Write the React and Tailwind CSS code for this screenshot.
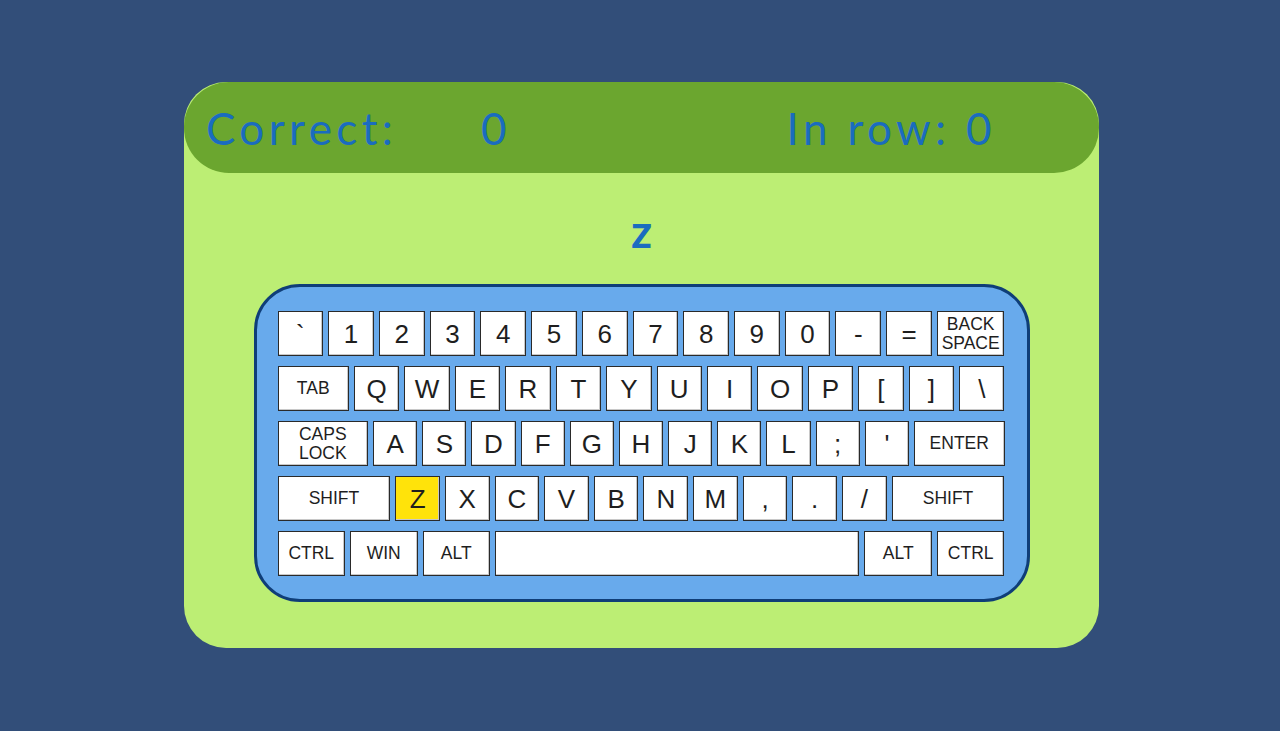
import React from "react";

const GROW = {
  1: "grow",
  1.5: "grow-[1.5]",
  1.6: "grow-[1.6]",
  2.1: "grow-[2.1]",
  2.6: "grow-[2.6]",
  8.3: "grow-[8.3]",
};

const k = (label, grow = 1, small = false, active = false) => ({ label, grow, small, active });

const rows = [
  [..."`1234567890-=".split("").map((c) => k(c)), k("BACK\nSPACE", 1.5, true)],
  [k("TAB", 1.6, true), ..."QWERTYUIOP[]\\".split("").map((c) => k(c))],
  [k("CAPS\nLOCK", 2.1, true), ..."ASDFGHJKL;'".split("").map((c) => k(c)), k("ENTER", 2.1, true)],
  [
    k("SHIFT", 2.6, true),
    k("Z", 1, false, true),
    ..."XCVBNM,./".split("").map((c) => k(c)),
    k("SHIFT", 2.6, true),
  ],
  [k("CTRL", 1.5, true), k("WIN", 1.5, true), k("ALT", 1.5, true), k("", 8.3), k("ALT", 1.5, true), k("CTRL", 1.5, true)],
];

function Key({ label, grow, small, active }) {
  return (
    <div
      className={`${GROW[grow]} basis-0 h-[45px] flex items-center justify-center border border-[#2a2a2a] shadow-[inset_-1px_-1px_0_#c8c8c8] text-[#1e1e1e] whitespace-pre text-center ${
        active ? "bg-[#ffe30a]" : "bg-white"
      } ${small ? "text-[17.5px] leading-[19px]" : "text-[26px] leading-none"}`}
      style={{ fontFamily: '"Liberation Sans", Arial, sans-serif' }}
    >
      {label}
    </div>
  );
}

export default function App() {
  return (
    <div className="w-[1280px] h-[731px] bg-[#324e79] flex justify-center pt-[82px] pl-[3px]">
      <div className="w-[915px] h-[566px] bg-[#bcee74] rounded-[42px] flex flex-col items-center">
        <div
          className="w-full h-[91px] shrink-0 bg-[#6ba62f] rounded-[45px] flex items-center pl-[22px] text-[#1a6cbf] text-[44px] tracking-[4.4px]"
          style={{ fontFamily: "Lato, sans-serif" }}
        >
          <span className="w-[275px]">Correct:</span>
          <span>0</span>
          <span className="ml-auto mr-[103px]">In row: 0</span>
        </div>
        <div
          className="h-[111px] shrink-0 flex items-center justify-center pt-[4px] text-[#1a6cbf] text-[46px] font-bold"
          style={{ fontFamily: "Lato, sans-serif" }}
        >
          z
        </div>
        <div className="w-[776px] h-[318px] shrink-0 bg-[#68aaec] border-[3px] border-[#0f3e78] rounded-[46px] pt-[24px] pl-[21px] pr-[22px] flex flex-col gap-[10px]">
          {rows.map((row, i) => (
            <div key={i} className="flex gap-[5px]">
              {row.map((key, j) => (
                <Key key={j} {...key} />
              ))}
            </div>
          ))}
        </div>
      </div>
    </div>
  );
}
